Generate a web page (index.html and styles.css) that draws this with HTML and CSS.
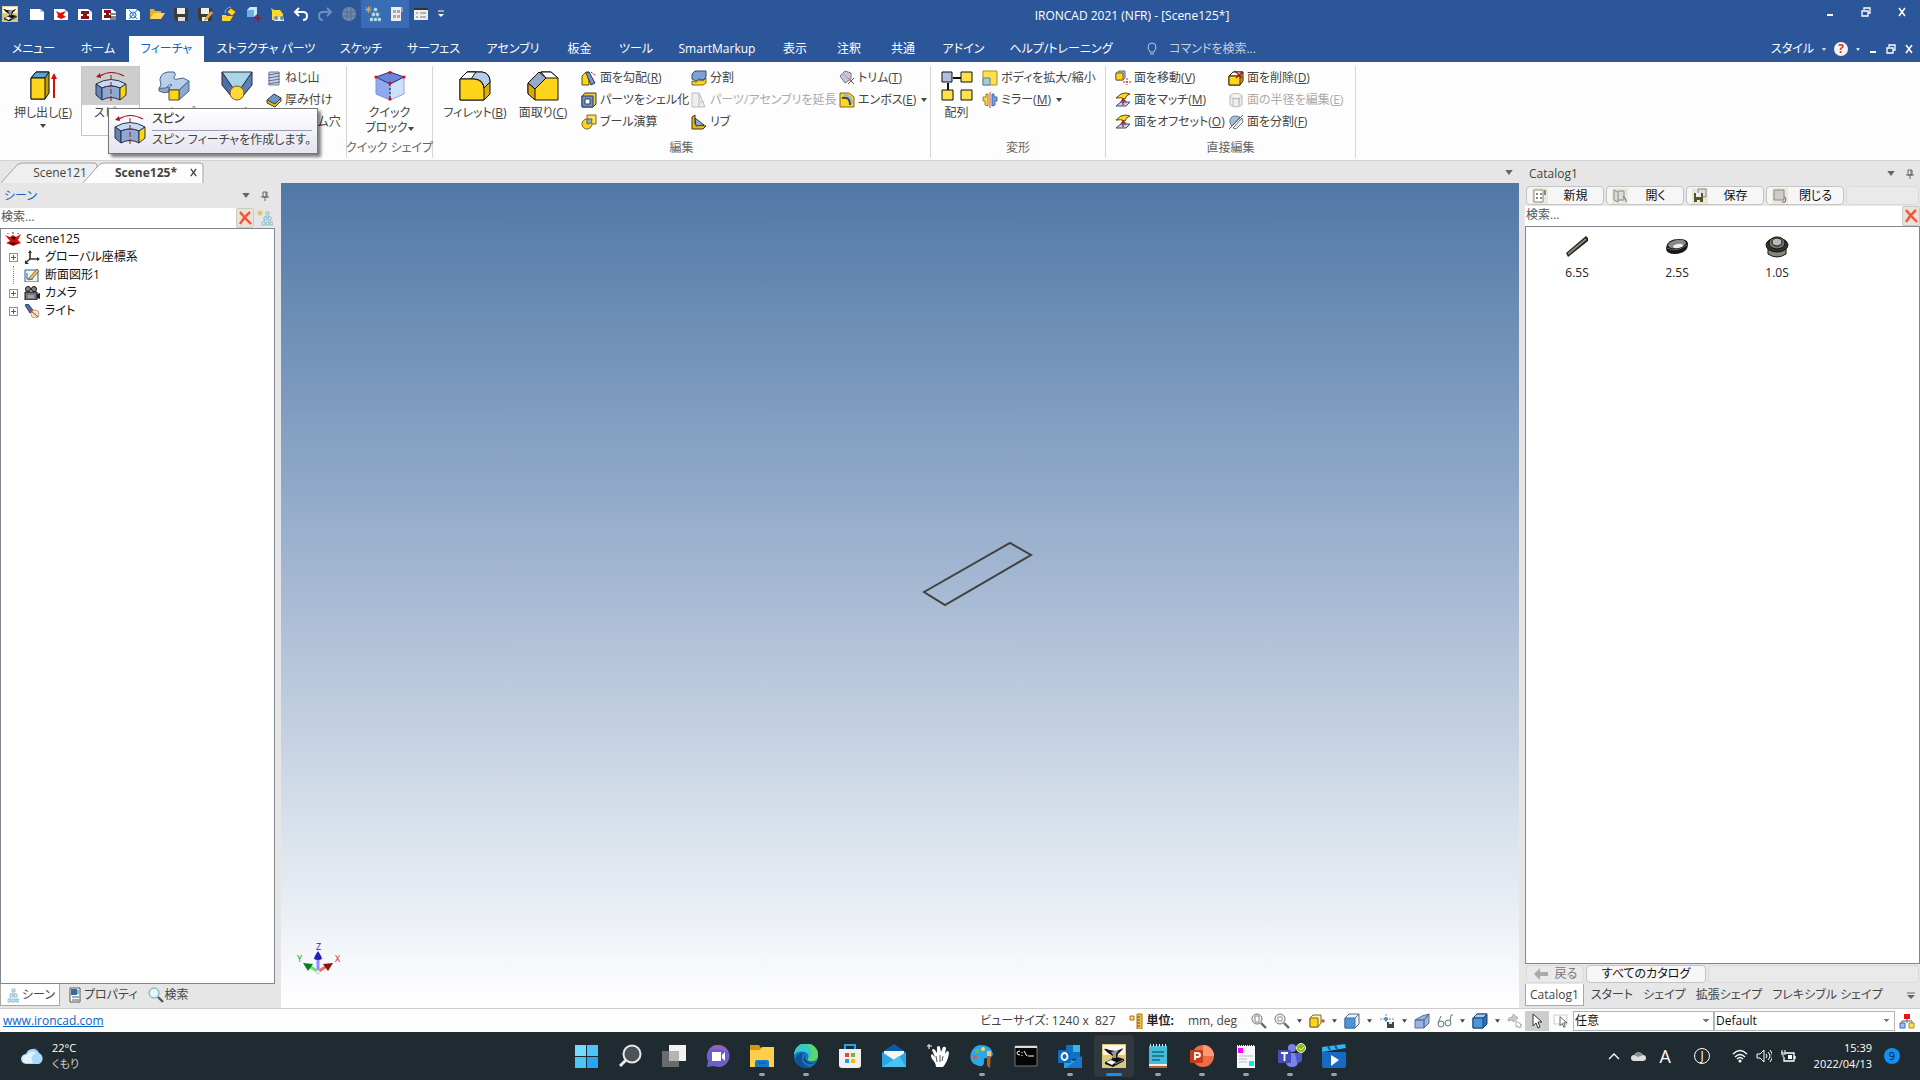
FILE: index.html
```html
<!DOCTYPE html>
<html lang="ja">
<head>
  <meta charset="UTF-8" />
  <meta name="viewport" content="width=device-width, initial-scale=1.0"/>
  <title>IRONCAD 2021 (NFR) - [Scene125*]</title>
  <link rel="stylesheet" href="styles.css">
</head>
<body>
  <!-- shared icons -->
  <svg class="defs" aria-hidden="true">
    <symbol id="i-logo" viewBox="0 0 24 24">
      <rect width="24" height="24" fill="#d9c980"/><path d="M1 1h22v10H1z" fill="#fff3cf"/>
      <path d="M2 5l4 4 5 3-1 3-7 3v2l8 3 11-6v-2l-7-2 1-3 5-5V3z" fill="#111"/>
      <path d="M3 4l6-2 11 0 2 2-8 3-7-1z" fill="#fafafa"/><path d="M9 8l8-2-3 4v4h-3v-3z" fill="#999"/>
      <path d="M4 18l5-2 5 2-4 3z" fill="#f2f2f2"/><path d="M13 20l8-4" stroke="#888"/>
    </symbol>
    <symbol id="i-spin" viewBox="0 0 32 30">
      <path d="M5 5Q16-2 29 5" fill="none" stroke="#a01820" stroke-width="1.2"/><path d="M1 6l4-4 1 5z" fill="#a01820"/>
      <path d="M1 13Q16 4 31 13L25 17Q16 13 7 17z" fill="#c5daf0" stroke="#26324a"/>
      <path d="M1 13l6 4v12l-6-5z" fill="#6884b4" stroke="#26324a"/><path d="M7 17q9-4 18 0v12q-9-5-18 0z" fill="#8fa9d2" stroke="#26324a"/>
      <path d="M25 17l6-4v11l-6 5z" fill="#ffd60a" stroke="#26324a"/><path d="M16 4v26" stroke="#a01820" stroke-dasharray="5 2"/>
    </symbol>
    <symbol id="i-caret" viewBox="0 0 6 4"><path d="M0 0h6L3 4z" fill="currentColor"/></symbol>
    <symbol id="i-pin" viewBox="0 0 8 10"><path d="M2 1h4v5H2zM0 6h8M4 6v4M5 1v5" fill="none" stroke="#666"/></symbol>
    <symbol id="i-x" viewBox="0 0 16 16"><path d="M3 2q4 5 11 12M13 2Q7 7 3 14" stroke="#f4523a" stroke-width="2.4" fill="none"/></symbol>
    <symbol id="i-tree" viewBox="0 0 16 16">
      <path d="M10 3L6 14M10 3l4 11M8 9h4" stroke="#8ebbd0" stroke-dasharray="2 1" fill="none"/>
      <path d="M9 2h3v3H9zM7 7h3v3H7zM11 7h3v3h-3zM5 12h3v3H5zM9 12h3v3H9zM13 12h3v3h-3z" fill="#d4edf4" stroke="#79a9bd" stroke-width=".7"/>
    </symbol>
    <symbol id="i-star" viewBox="0 0 8 8"><path d="M4 0v8M0 4h8M1 1l6 6M7 1L1 7" stroke="#e9ad35" stroke-width="1"/></symbol>
    <symbol id="i-restore" viewBox="0 0 10 10"><path d="M3 3V1h6v5H7M1 4h6v5H1z" fill="none" stroke="#fff" stroke-width="1.3"/></symbol>
    <symbol id="i-close" viewBox="0 0 10 10"><path d="M2 1l6 8M8 1L2 9" stroke="currentColor" stroke-width="1.5"/></symbol>
    <symbol id="i-min" viewBox="0 0 10 10"><path d="M2 8h6" stroke="#fff" stroke-width="2"/></symbol>
    <symbol id="i-cube" viewBox="0 0 16 16">
      <path d="M1 5l4-4h10v10l-4 4H1z" fill="#eef4fa" stroke="#56687c"/><path d="M1 5h10v10H1z" fill="#4b96db" stroke="#3b70a4"/><path d="M11 5l4-4" stroke="#56687c"/>
    </symbol>
    <symbol id="i-match" viewBox="0 0 16 16">
      <path d="M1 14l5-4h9l-4 4z" fill="#c3d2f0" stroke="#314a82"/>
      <path d="M1 6l5-4q5-2 9 0-4 1-5 5-4-2-9-1z" fill="#ffd91e" stroke="#5b4b08"/>
      <path d="M8 13V8M6 10l2-3 3 3" fill="none" stroke="#c01515" stroke-width="1.3"/>
    </symbol>
    <symbol id="i-cursor" viewBox="0 0 12 16"><path d="M2 1v12l3-3 2 5 2-1-2-5h4z" fill="#fff" stroke="#333"/></symbol>
  </svg>

  <header class="top">
    <div class="titlebar">
      <div class="quick">
        <button class="q-logo" aria-label="IRONCAD"><svg viewBox="0 0 16 16"><use href="#i-logo"/></svg></button>
        <button aria-label="新規"><svg viewBox="0 0 16 16"><path d="M1 3h10l4 3v8H1z" fill="#fff"/><path d="M11 3v3h4" fill="#ccc"/></svg></button>
        <button aria-label="シーン"><svg viewBox="0 0 16 16"><path d="M1 3h10l4 3v8H1z" fill="#fff"/><path d="M3 5l4 2 6-2-3 4 3 2-5 2-4-2 1-2z" fill="#e01010"/></svg></button>
        <button aria-label="図面"><svg viewBox="0 0 16 16"><path d="M1 3h10l4 3v8H1z" fill="#fff"/><path d="M4 5h8v3h-2v2h2v3H4v-3h2V8H4z" fill="#8c1018"/></svg></button>
        <button aria-label="図面 2"><svg viewBox="0 0 16 16"><path d="M1 3h10l4 3v8H1z" fill="#fff"/><path d="M3 4h7v3H8v2h2v3H3V9h2V7H3z" fill="#8c1018"/><path d="M9 8h6M9 11h6M9 13h6" stroke="#111"/></svg></button>
        <button aria-label="スケッチ"><svg viewBox="0 0 16 16"><path d="M1 3h10l4 3v8H1z" fill="#fff"/><path d="M4 4l8 9M12 4l-8 9" stroke="#167ec5"/><circle cx="8" cy="9" r="3" fill="none" stroke="#167ec5"/></svg></button>
        <button aria-label="開く"><svg viewBox="0 0 16 16"><path d="M1 13V3h4l1 2h6v3" fill="#e4ae28"/><path d="M1 13l4-6h11l-4 6z" fill="#ffd55c"/></svg></button>
        <button aria-label="保存"><svg viewBox="0 0 16 16"><path d="M1 2h14v13H3l-2-2z" fill="#3b3b3b"/><path d="M4 2h8v6H4z" fill="#eee"/><path d="M5 11h7v4H5z" fill="#ddd"/></svg></button>
        <button aria-label="名前を付けて保存"><svg viewBox="0 0 16 16"><path d="M1 2h14v13H3l-2-2z" fill="#3b3b3b"/><path d="M4 2h8v6H4zM5 11h6v4H5z" fill="#eee"/><path d="M8 12l6-7 2 2-6 7-3 1z" fill="#e7a23a"/></svg></button>
        <button aria-label="パーツを開く"><svg viewBox="0 0 16 16"><path d="M1 15V9h4l1 1h6l-3 5z" fill="#ffd132"/><path d="M6 6l4-4 5 4-4 4z" fill="#ffd132" stroke="#765b11"/><path d="M4 7q0-5 6-6" fill="none" stroke="#6db3ea"/></svg></button>
        <button aria-label="追加"><svg viewBox="0 0 16 16"><path d="M2 4l3-3h7v7l-3 3H2z" fill="#cfe8fb"/><path d="M2 4h7v7H2z" fill="#6baee6"/><path d="M13 9v7M9 12h7" stroke="#a20f24" stroke-width="1.4"/></svg></button>
        <button aria-label="検索"><svg viewBox="0 0 16 16"><path d="M2 2l3 2h6l3 4v6H3V5z" fill="#ffd929"/><path d="M5 11h10v4H5z" fill="#e2eaf1"/><circle cx="7" cy="12" r="2" fill="#5b8dc7"/><circle cx="13" cy="12" r="2" fill="#5b8dc7"/></svg></button>
        <button aria-label="元に戻す"><svg viewBox="0 0 16 16"><path d="M6 2L2 6l4 4M2 6h8q4 0 4 4t-4 4" fill="none" stroke="#fff" stroke-width="2"/></svg></button>
        <button aria-label="やり直し"><svg viewBox="0 0 16 16"><path d="M10 2l4 4-4 4M14 6H6q-4 0-4 4t4 4" fill="none" stroke="#6f8fbc" stroke-width="2"/></svg></button>
        <button aria-label="球"><svg viewBox="0 0 16 16"><circle cx="8" cy="8" r="7" fill="#7388a9"/><path d="M2 6h12M2 10h12M6 2v12M10 2v12" stroke="#526d96"/></svg></button>
        <button class="on" aria-label="シーンブラウザ"><svg viewBox="0 0 16 16"><use href="#i-tree"/><use href="#i-star" width="7" height="7"/></svg></button>
        <button class="on" aria-label="カタログ"><svg viewBox="0 0 16 16"><path d="M2 1h10v14H2z" fill="#eee"/><path d="M12 1h2v5h-2" fill="#999"/><path d="M4 4h3v3H4zM8 4h3v3H8zM4 9h3v3H4zM8 9h3v3H8z" fill="#aaa"/></svg></button>
        <button aria-label="プロパティ"><svg viewBox="0 0 16 16"><path d="M1 2h14v12H1z" fill="#eee"/><path d="M1 2h14v2H1z" fill="#333"/><path d="M3 7h2M3 11h2M7 7h6M7 11h6" stroke="#777"/></svg></button>
        <button class="q-more" aria-label="カスタマイズ"><svg viewBox="0 0 8 8"><path d="M1 1h6" stroke="#fff"/><path d="M1 4h6L4 7z" fill="#fff"/></svg></button>
      </div>
      <div class="app-title">IRONCAD 2021 (NFR) - [Scene125*]</div>
      <div class="win">
        <button aria-label="最小化"><svg><use href="#i-min"/></svg></button>
        <button aria-label="元に戻す (縮小)"><svg><use href="#i-restore"/></svg></button>
        <button aria-label="閉じる"><svg><use href="#i-close"/></svg></button>
      </div>
    </div>
    <div class="menubar">
      <nav class="tabs">
        <a href="#">メニュー</a>
        <a href="#">ホーム</a>
        <a href="#" class="active">フィーチャ</a>
        <a href="#">ストラクチャ パーツ</a>
        <a href="#">スケッチ</a>
        <a href="#">サーフェス</a>
        <a href="#">アセンブリ</a>
        <a href="#">板金</a>
        <a href="#">ツール</a>
        <a href="#">SmartMarkup</a>
        <a href="#">表示</a>
        <a href="#">注釈</a>
        <a href="#">共通</a>
        <a href="#">アドイン</a>
        <a href="#">ヘルプ/トレーニング</a>
      </nav>
      <label class="cmd">
        <svg viewBox="0 0 10 14"><path d="M3 10Q1 7 1 5a4 4 0 0 1 8 0q0 2-2 5zM3 12h4" fill="none" stroke="#b9c6dc"/></svg>
        <input type="text" placeholder="コマンドを検索..." aria-label="コマンドを検索">
      </label>
      <div class="menu-right">
        <button>スタイル</button>
        <svg class="caret"><use href="#i-caret"/></svg>
        <button aria-label="ヘルプ" class="help">?</button>
        <svg class="caret"><use href="#i-caret"/></svg>
        <button aria-label="最小化"><svg><use href="#i-min"/></svg></button>
        <button aria-label="元に戻す"><svg><use href="#i-restore"/></svg></button>
        <button aria-label="閉じる"><svg><use href="#i-close"/></svg></button>
      </div>
    </div>
  </header>

  <section class="ribbon">
    <div class="group g-shape">
      <div class="tools">
        <button class="big first">
          <svg viewBox="0 0 32 30"><path d="M4 7l5-6h13v21l-4 6H4z" fill="#c79a04" stroke="#111"/><path d="M4 7l5-6h13l-4 6z" fill="#5aa2d8" stroke="#111"/><path d="M4 7h14v21H4z" fill="#ffd51c" stroke="#111"/><path d="M27 27V7" stroke="#c11" stroke-width="2"/><path d="M24 8l3-6 3 6z" fill="#c11"/></svg>
          <span>押し出し(<u>E</u>)</span><svg class="caret"><use href="#i-caret"/></svg>
        </button>
        <button class="big hover"><svg viewBox="0 0 32 30"><use href="#i-spin"/></svg><span>スピン</span></button>
        <button class="big">
          <svg viewBox="0 0 32 30"><path d="M1 17v3q5 3 10 1v-5z" fill="#8ba7d0" stroke="#4b6286"/><path d="M2 8q1-6 8-7h6q3 2 0 5-1 3 4 2l5-1 6 3-10 9H11q0-4 3-5-3-1-4 1-1 3-9 2 2-2 2-4-1-2-1-5z" fill="#b8cfeb" stroke="#4b6286"/><path d="M21 19l10-9v10l-10 9z" fill="#8ba7d0" stroke="#4b6286"/><path d="M11 19h10v10H11z" fill="#ffd51c" stroke="#554b20"/></svg>
          <span>スイープ</span>
        </button>
        <button class="big">
          <svg viewBox="0 0 32 30"><path d="M1 1v13l9 11 2-9z" fill="#4f6fa8" stroke="#222b40"/><path d="M31 1v13l-9 11-2-9z" fill="#5f7eb5" stroke="#222b40"/><path d="M1 1h30L20 17h-8z" fill="#a8d6e6" stroke="#222b40"/><circle cx="16" cy="22" r="7" fill="#ffd93b" stroke="#735b12"/></svg>
          <span>ロフト</span>
        </button>
        <div class="stack">
          <button><svg viewBox="0 0 16 16"><path d="M3 2h10v13H3z" fill="#c6d2e4" stroke="#73829b"/><path d="M2 5l12-2M2 8l12-2M2 11l12-2M2 14l12-2" stroke="#60718d"/></svg><span>ねじ山</span></button>
          <button><svg viewBox="0 0 16 16"><path d="M1 8v3l8 4 6-6V6z" fill="#e9bd10" stroke="#4d4010"/><path d="M1 8l7-6 7 4-6 6z" fill="#6f93c8" stroke="#303c58"/></svg><span>厚み付け</span></button>
          <button><svg viewBox="0 0 16 16"><path d="M1 5l7-4 7 4v7l-7 3-7-3z" fill="#ffd51c" stroke="#554410"/><ellipse cx="8" cy="6" rx="3" ry="2" fill="#4f6fa8"/></svg><span>カスタム穴</span></button>
        </div>
      </div>
      <div class="tip" role="tooltip">
        <svg viewBox="0 0 32 30"><use href="#i-spin"/></svg>
        <div><strong>スピン</strong><p>スピン フィーチャを作成します。</p></div>
      </div>
    </div>
    <div class="group g-quick">
      <div class="tools">
        <button class="big">
          <svg viewBox="0 0 32 30"><path d="M2 6l14 7v16L2 23z" fill="#8faaf0" stroke="#7d92dc"/><path d="M30 6l-14 7v16l14-6z" fill="#cfe1fa" stroke="#8fa8df"/><path d="M2 6l14-5 14 5-14 7z" fill="#6d84dd" stroke="#27346e"/><path d="M16 13v16" stroke="#111" stroke-dasharray="2 2"/><g fill="#f00"><circle cx="2" cy="6" r="1.6"/><circle cx="16" cy="1.6" r="1.6"/><circle cx="30" cy="6" r="1.6"/><circle cx="16" cy="12" r="1.6"/><circle cx="16" cy="28" r="1.6"/></g></svg>
          <span>クイック<br>ブロック<svg class="caret"><use href="#i-caret"/></svg></span>
        </button>
      </div>
      <h2>クイック シェイプ</h2>
    </div>
    <div class="group g-edit">
      <div class="tools">
        <button class="big">
          <svg viewBox="0 0 32 30"><path d="M1 8l7-7h15q8 1 8 10v12l-6 6H1z" fill="#dcae08" stroke="#111"/><path d="M1 8l7-7h15q8 1 8 10l-6 6q-1-9-10-9z" fill="#b3cdea" stroke="#111"/><path d="M1 8l7-7h9l-5 7z" fill="#fff" stroke="#111"/><path d="M1 29V8h14q10 1 10 11v10z" fill="#ffd51c" stroke="#111"/></svg>
          <span>フィレット(<u>B</u>)</span>
        </button>
        <button class="big">
          <svg viewBox="0 0 32 30"><path d="M1 13L14 1h10l7 6v22H8l-7-7z" fill="#ffd51c" stroke="#111"/><path d="M14 1h10l7 6H19z" fill="#fff" stroke="#111"/><path d="M1 12L12 1l7 6L8 18z" fill="#94a9cb" stroke="#111"/><path d="M1 12l7 6v11l-7-6z" fill="#d9ab08" stroke="#111"/></svg>
          <span>面取り(<u>C</u>)</span>
        </button>
        <div class="stack">
          <button><svg viewBox="0 0 16 16"><path d="M1 6l4-4h3v13H1z" fill="#ffd51c" stroke="#5b4b08"/><path d="M5 3l3-1 6 11-4 2z" fill="#7796c4" stroke="#2b3b5c"/><path d="M10 2l5 4" stroke="#c11" stroke-dasharray="2 1"/></svg><span>面を勾配(<u>R</u>)</span></button>
          <button><svg viewBox="0 0 16 16"><path d="M1 4l3-3h11v11l-3 3H1z" fill="#f0c93c" stroke="#313c52"/><path d="M1 4h11v11H1z" fill="#6c93c7" stroke="#313c52"/><path d="M4 7h5v5H4z" fill="#fff" stroke="#313c52"/></svg><span>パーツをシェル化</span></button>
          <button><svg viewBox="0 0 16 16"><path d="M6 1h9v9H6z" fill="#ffe24a" stroke="#80671d"/><circle cx="6" cy="10" r="5" fill="#ffd51c" stroke="#80671d"/><path d="M6 5h5q0 5-5 5z" fill="#8ea8d8" stroke="#4b638f"/></svg><span>ブール演算</span></button>
        </div>
        <div class="stack">
          <button><svg viewBox="0 0 16 16"><path d="M1 4l3-3h11v6l-3 3-4-1-3 2-4-2z" fill="#7ba1d6" stroke="#31486d"/><path d="M1 11l4 1 3-2 4 1 3-3v5l-3 2H1z" fill="#ffd51c" stroke="#80671d"/></svg><span>分割</span></button>
          <button disabled><svg viewBox="0 0 16 16"><path d="M1 1h7l6 14H1zM8 1v14M9 10h4" fill="#eee" stroke="#bbb"/></svg><span>パーツ/アセンブリを延長</span></button>
          <button><svg viewBox="0 0 16 16"><path d="M1 3l3-2v9l11 2-3 3H1z" fill="#e7bd14" stroke="#403610"/><path d="M4 4l9 7-8 1z" fill="#8caad8" stroke="#283b5a"/></svg><span>リブ</span></button>
        </div>
        <div class="stack">
          <button><svg viewBox="0 0 16 16"><path d="M1 6l5-5 6 2v6l-6 4z" fill="#bdc9dc" stroke="#777"/><path d="M9 8l6 6M15 8l-6 6" stroke="#555"/><path d="M3 3l9 8" stroke="#e77"/></svg><span>トリム(<u>T</u>)</span></button>
          <button><svg viewBox="0 0 16 16"><path d="M1 1h9l5 4v10H1z" fill="#ffd51c" stroke="#80671d"/><path d="M3 6q8-2 8 7" fill="none" stroke="#304467" stroke-width="2"/><path d="M5 3q8 0 8 9" fill="none" stroke="#9bb3d8" stroke-width="2"/></svg><span>エンボス(<u>E</u>)</span><svg class="caret"><use href="#i-caret"/></svg></button>
        </div>
      </div>
      <h2>編集</h2>
    </div>
    <div class="group g-trans">
      <div class="tools">
        <button class="big">
          <svg viewBox="0 0 32 30"><path d="M12 7h8M7 12v7" stroke="#111" stroke-width="2"/><path d="M1 1h10v10H1z" fill="#aebfe2" stroke="#111"/><path d="M20 1h11v10H20zM1 19h11v10H1zM20 19h11v10H20z" fill="#ffe24a" stroke="#111"/></svg>
          <span>配列</span>
        </button>
        <div class="stack">
          <button><svg viewBox="0 0 16 16"><path d="M1 1h14v14H1z" fill="#ffe24a" stroke="#a88d28"/><path d="M1 8h7v7H1z" fill="#a5cbe0" stroke="#5b829b"/></svg><span>ボディを拡大/縮小</span></button>
          <button><svg viewBox="0 0 16 16"><path d="M6 2v12l-3-1V9H1V5h3V2z" fill="#ffd944" stroke="#9a8025"/><path d="M10 2v12l3-1V9h2V5h-3V2z" fill="#6da5e9" stroke="#3d6ea9"/><path d="M8 0v16" stroke="#e33"/></svg><span>ミラー(<u>M</u>)</span><svg class="caret"><use href="#i-caret"/></svg></button>
        </div>
      </div>
      <h2>変形</h2>
    </div>
    <div class="group g-direct">
      <div class="tools">
        <div class="stack">
          <button><svg viewBox="0 0 16 16"><path d="M1 3l3-2h6v7l-2 2H1z" fill="#9db8df" stroke="#5a6f94"/><path d="M1 3h7v7H1z" fill="#ffd51c" stroke="#80671d"/><path d="M12 8v7M8 12h8" stroke="#b22" stroke-dasharray="2 1"/></svg><span>面を移動(<u>V</u>)</span></button>
          <button><svg viewBox="0 0 16 16"><use href="#i-match"/></svg><span>面をマッチ(<u>M</u>)</span></button>
          <button><svg viewBox="0 0 16 16"><use href="#i-match"/></svg><span>面をオフセット(<u>O</u>)</span></button>
        </div>
        <div class="stack">
          <button><svg viewBox="0 0 16 16"><path d="M1 6l4-4h10v9l-3 4H1z" fill="#d1a50b" stroke="#332b0c"/><path d="M1 6l4-4h10l-3 4z" fill="#fff" stroke="#332b0c"/><path d="M1 6h11v9H1z" fill="#ffd51c" stroke="#332b0c"/><path d="M7 1l7 7M14 2L8 8" stroke="#b11" stroke-width="1.3"/></svg><span>面を削除(<u>D</u>)</span></button>
          <button disabled><svg viewBox="0 0 16 16"><path d="M2 4v9q6 4 12 0V4M5 6v8M11 6v8M7 7h4v4" fill="#eee" stroke="#bbb"/><ellipse cx="8" cy="4" rx="6" ry="2.5" fill="#f3f3f3" stroke="#bbb"/></svg><span>面の半径を編集(<u>E</u>)</span></button>
          <button><svg viewBox="0 0 16 16"><path d="M2 9q-1-7 6-7l4 1-8 9z" fill="#a7bbdb" stroke="#65789b"/><path d="M5 14l9-10 1 4-7 7z" fill="#eee" stroke="#777"/><path d="M1 15L15 1" stroke="#d33"/></svg><span>面を分割(<u>F</u>)</span></button>
        </div>
      </div>
      <h2>直接編集</h2>
    </div>
  </section>

  <main class="work">
    <div class="docs">
      <div class="doctabs">
        <button class="doctab"><svg viewBox="0 0 98 21" preserveAspectRatio="none"><path d="M1 21L16 4q3-3 6-3h72q3 0 3 3v17"/></svg><span>Scene121</span></button>
        <button class="doctab current"><svg viewBox="0 0 122 21" preserveAspectRatio="none"><path d="M1 21L16 4q3-3 6-3h96q3 0 3 3v17"/></svg><span>Scene125*</span><svg class="tabx"><use href="#i-close"/></svg></button>
        <svg class="caret docs-menu"><use href="#i-caret"/></svg>
      </div>
      <div class="docbody">
        <aside class="panel scene">
          <div class="panel-head"><span class="blue">シーン</span><svg class="caret"><use href="#i-caret"/></svg><svg class="pin"><use href="#i-pin"/></svg></div>
          <div class="searchrow">
            <input type="text" placeholder="検索..." aria-label="シーンを検索">
            <button aria-label="クリア" class="clear"><svg><use href="#i-x"/></svg></button>
            <button aria-label="フィルタ" class="filter"><svg viewBox="0 0 16 16"><use href="#i-tree"/><use href="#i-star" width="6" height="6"/></svg></button>
          </div>
          <ul class="tree">
            <li class="root"><svg viewBox="0 0 16 14"><path d="M0 3l5 2 3-2 3 2 5-3-3 6 3 3-8 3-7-3 4-2z" fill="#d41414"/><path d="M6 5l3 4 2-4zM3 10l5 3 5-2" fill="#400" /><path d="M8 0v2M3 1v1M13 1v1" stroke="#333"/></svg>Scene125</li>
            <li><i class="plus"></i><svg viewBox="0 0 16 14"><path d="M6 1v8h9M6 9l-5 4" fill="none" stroke="#333" stroke-width="1.6"/><path d="M4 3l2-3 2 3zM13 7l3 2-3 2zM1 10v4h4z" fill="#333"/></svg>グローバル座標系</li>
            <li><i class="plus none"></i><svg viewBox="0 0 16 14"><path d="M1 2h13v12H1z" fill="#e9f4fb" stroke="#2e5d8c"/><path d="M3 5v6h6" fill="none" stroke="#2e5d8c"/><path d="M5 10l8-9 2 2-7 8-3 1z" fill="#efb65c" stroke="#5b4524" stroke-width=".7"/></svg>断面図形1</li>
            <li><i class="plus"></i><svg viewBox="0 0 16 14"><circle cx="4" cy="3" r="2.5" fill="#888" stroke="#111"/><circle cx="10" cy="3" r="2.5" fill="#888" stroke="#111"/><path d="M1 6h12v8H1z" fill="#777" stroke="#111"/><path d="M13 8l3-1v6l-3-1z" fill="#222"/><path d="M4 9h6v3H4z" fill="#a99bc9"/></svg>カメラ</li>
            <li><i class="plus"></i><svg viewBox="0 0 16 14"><path d="M1 1l3-1 5 6-3 3z" fill="#3d70b3" stroke="#23456f"/><circle cx="11" cy="10" r="4" fill="#f3e4c4" stroke="#b8a582"/><path d="M6 6l8 7" stroke="#d22"/></svg>ライト</li>
          </ul>
          <div class="btabs">
            <button class="current"><svg viewBox="0 0 16 16"><use href="#i-tree" x="-2"/></svg>シーン</button>
            <button><svg viewBox="0 0 16 16"><path d="M3 1h10v14H3z" fill="#fff" stroke="#555"/><path d="M4 2h6v6H4z" fill="#2e6da8"/><path d="M5 10h7M5 13h7M11 3v4" stroke="#555"/></svg>プロパティ</button>
            <button><svg viewBox="0 0 16 16"><circle cx="6" cy="6" r="5" fill="#dff6fb" stroke="#7c99a5"/><path d="M10 10l5 5" stroke="#555" stroke-width="2.4"/></svg>検索</button>
          </div>
        </aside>
        <div class="view">
          <svg class="sketch" viewBox="0 0 112 66"><path d="M2 51L88 2l21 12-86 50z" fill="none" stroke="#404040" stroke-width="2"/></svg>
          <!-- axis triad -->
          <svg class="triad" viewBox="0 0 48 34">
            <path d="M22 26V14" stroke="#8c8cff" stroke-width="3"/><path d="M18 14q0-2 4-8 4 6 4 8-4 2-8 0z" fill="#2222b5"/>
            <path d="M21 26l-8-5" stroke="#6fe07a" stroke-width="3"/><path d="M7 18l10 1-5 7z" fill="#0b7d14"/>
            <path d="M23 26l8-5" stroke="#f36a6a" stroke-width="3"/><path d="M37 18l-10 1 5 7z" fill="#8d0f12"/>
            <circle cx="22" cy="27" r="2" fill="#eee" stroke="#bbb" stroke-width=".5"/>
          </svg>
          <span class="ax ax-z">Z</span><span class="ax ax-y">Y</span><span class="ax ax-x">X</span>
        </div>
      </div>
    </div>
    <aside class="panel catalog">
      <div class="panel-head"><span>Catalog1</span><svg class="caret"><use href="#i-caret"/></svg><svg class="pin"><use href="#i-pin"/></svg></div>
      <div class="catbtns">
        <button><svg viewBox="0 0 16 16"><path d="M0 0h16v16H0z" fill="#ece8d8"/><path d="M2 2h9v12H2z" fill="#fff" stroke="#888"/><path d="M12 2h2v5h-2z" fill="#888"/><path d="M4 5h2v2H4zM8 5h2v2H8zM4 9h2v2H4zM8 9h2v2H8z" fill="#888"/></svg><span>新規</span></button>
        <button><svg viewBox="0 0 16 16"><path d="M0 0h16v16H0z" fill="#ece8d8"/><path d="M2 2l4 2v10l-4-2zM6 3h6v9H6" fill="#ddd" stroke="#888"/><path d="M11 9q3 0 3 5" fill="none" stroke="#666"/></svg><span>開く</span></button>
        <button><svg viewBox="0 0 16 16"><path d="M0 0h16v16H0z" fill="#ece8d8"/><path d="M6 1h8v8H6z" fill="#ddd" stroke="#888"/><path d="M2 5h9v9H2z" fill="#55552a"/><path d="M4 5h5v4H4zM5 12h3v2H5z" fill="#eee"/></svg><span>保存</span></button>
        <button><svg viewBox="0 0 16 16"><path d="M0 0h16v16H0z" fill="#ece8d8"/><path d="M2 2h10v10H2z" fill="#ccc" stroke="#888"/><path d="M12 9q3 0 1 5h-3" fill="none" stroke="#666"/></svg><span>閉じる</span></button>
        <div class="blank"></div>
      </div>
      <div class="searchrow">
        <input type="text" placeholder="検索..." aria-label="カタログを検索">
        <button aria-label="クリア" class="clear"><svg><use href="#i-x"/></svg></button>
      </div>
      <div class="items">
        <figure><svg viewBox="0 0 24 24"><path d="M1 18L21 1l2 2v3L3 22z" fill="#222"/><path d="M3 19L21 4" stroke="#8d8878" stroke-width="2"/></svg><figcaption>6.5S</figcaption></figure>
        <figure><svg viewBox="0 0 24 24"><path d="M1 13q1-9 13-9 9 0 9 5 0 9-13 10-9 0-9-6z" fill="#161616"/><ellipse cx="12" cy="9" rx="9" ry="4" transform="rotate(-10 12 9)" fill="#888"/><ellipse cx="13" cy="11" rx="5" ry="2" transform="rotate(-10 13 11)" fill="#eee"/><path d="M2 13q9 5 20-3" stroke="#666" fill="none"/></svg><figcaption>2.5S</figcaption></figure>
        <figure><svg viewBox="0 0 24 24"><path d="M3 12v7q9 6 18 0v-7z" fill="#8a8475" stroke="#111"/><ellipse cx="12" cy="10" rx="11" ry="7" fill="#333" stroke="#111"/><ellipse cx="12" cy="8" rx="8" ry="6" fill="#77736a" stroke="#111"/><ellipse cx="12" cy="7" rx="5" ry="4" fill="#bbb" stroke="#111"/></svg><figcaption>1.0S</figcaption></figure>
      </div>
      <div class="backrow">
        <button disabled><svg viewBox="0 0 16 16"><path d="M1 8l6-6v4h8v4H7v4z" fill="#aaa"/></svg>戻る</button>
        <button class="all">すべてのカタログ</button>
        <div class="blank"></div>
      </div>
      <div class="btabs">
        <button class="current">Catalog1</button>
        <button>スタート</button>
        <button>シェイプ</button>
        <button>拡張シェイプ</button>
        <button>フレキシブル シェイプ</button>
        <svg class="more" viewBox="0 0 8 8"><path d="M0 1h8" stroke="#666"/><path d="M0 3h8L4 7z" fill="#666"/></svg>
      </div>
    </aside>
  </main>

  <footer class="status">
    <a href="#">www.ironcad.com</a>
    <span class="size">ビューサイズ: 1240 x&nbsp; 827</span>
    <svg class="ic" viewBox="0 0 16 16"><path d="M9 1h5v15H9z" fill="#f4bc4a" stroke="#a8741a"/><path d="M9 4h3M9 7h3M9 10h3M9 13h3" stroke="#7b5312"/><path d="M2 3h4v4H2z" fill="#f4d77b" stroke="#a8741a"/></svg>
    <strong>単位:</strong>
    <span class="unit">mm, deg</span>
    <div class="vtools">
      <button aria-label="全体表示"><svg viewBox="0 0 16 16"><circle cx="6" cy="6" r="5" fill="#eef4f6" stroke="#777"/><path d="M4 3h4v6H4z" fill="#fff" stroke="#888"/><path d="M10 10l5 5" stroke="#666" stroke-width="2.4"/></svg></button>
      <button aria-label="ズーム"><svg viewBox="0 0 16 16"><circle cx="6" cy="6" r="5" fill="#eef4f6" stroke="#777"/><path d="M4 4h4v4H4z" fill="#fff" stroke="#999"/><path d="M10 10l5 5" stroke="#666" stroke-width="2.4"/></svg></button>
      <svg class="caret"><use href="#i-caret"/></svg>
      <button aria-label="向き"><svg viewBox="0 0 16 16"><path d="M1 5l3-3h8v8l-3 4H1z" fill="#fff3b0" stroke="#80671d"/><path d="M1 5h8v9H1z" fill="#ffd51c" stroke="#80671d"/><path d="M12 8h4M14 6v4" stroke="#b22"/></svg></button>
      <svg class="caret"><use href="#i-caret"/></svg>
      <button aria-label="表示方向"><svg viewBox="0 0 16 16"><use href="#i-cube"/></svg></button>
      <svg class="caret"><use href="#i-caret"/></svg>
      <button aria-label="カメラ保存"><svg viewBox="0 0 16 16"><path d="M1 6h14M7 1v9" stroke="#6b8ca8" stroke-dasharray="2 1"/><circle cx="7" cy="6" r="2" fill="#3c8ed2"/><path d="M8 9h7v6H8z" fill="#444"/><path d="M10 9h3v2h-3z" fill="#ddd"/></svg></button>
      <svg class="caret"><use href="#i-caret"/></svg>
      <button aria-label="遠近"><svg viewBox="0 0 16 16"><path d="M1 7h9v8H1zM1 7l7-4 7-2-5 6zM10 7l5-6v9l-5 5z" fill="#9bb4de" stroke="#56709c"/></svg></button>
      <button aria-label="表示"><svg viewBox="0 0 16 16"><circle cx="4" cy="11" r="3" fill="#e9f8f5" stroke="#607d79"/><circle cx="11" cy="10" r="3" fill="#e9f8f5" stroke="#607d79"/><path d="M1 10L4 3M13 8l1-6h2" fill="none" stroke="#607d79"/></svg></button>
      <svg class="caret"><use href="#i-caret"/></svg>
      <button aria-label="レンダリング"><svg viewBox="0 0 16 16"><path d="M1 5l4-4h10v10l-4 4H1z" fill="#2f6fb2" stroke="#1d4270"/><path d="M1 5l4-4h10l-4 4z" fill="#a3cdf2" stroke="#1d4270"/><path d="M1 5h10v10H1z" fill="#4b96db" stroke="#1d4270"/></svg></button>
      <svg class="caret"><use href="#i-caret"/></svg>
      <button aria-label="やり直し選択"><svg viewBox="0 0 16 16"><path d="M1 8q0-4 5-4V1l5 4-5 4V7Q3 7 1 8z" fill="#ccc" stroke="#aaa"/><path d="M9 8v6l2-1 1 2 2-1-1-2h2z" fill="#fff" stroke="#aaa"/></svg></button>
    </div>
    <button class="sel on" aria-label="選択"><svg viewBox="0 0 12 16"><use href="#i-cursor"/></svg></button>
    <button class="sel" aria-label="範囲選択"><svg viewBox="0 0 16 16"><path d="M1 2h13v9H1z" fill="none" stroke="#ccc"/><use href="#i-cursor" x="5" y="3" width="10" height="12"/></svg></button>
    <select aria-label="選択フィルタ" class="s1"><option>任意</option></select>
    <select aria-label="構成" class="s2"><option>Default</option></select>
    <svg class="ic" viewBox="0 0 16 16"><path d="M8 5v5M3 11V8h10v3" fill="none" stroke="#567"/><path d="M5 1h6v5H5z" fill="#e11"/><path d="M1 10h5v5H1z" fill="#9bbdf0" stroke="#456aa8"/><path d="M10 10h5v5h-5z" fill="#ffe24a" stroke="#a88d28"/></svg>
  </footer>

  <div class="taskbar">
    <div class="weather">
      <svg viewBox="0 0 24 18"><path d="M6 17a5 5 0 0 1 0-10 7 7 0 0 1 13-1 6 6 0 0 1 0 11z" fill="#a9dafb"/><path d="M13 1a7 7 0 0 1 6 5 5 5 0 0 1 3 3q-3-5-9-8z" fill="#4d93d8"/><path d="M6 16a4 4 0 0 1 1-8 6 6 0 0 1 9-2q-7 3-3 10z" fill="#e3f4fe"/></svg>
      <div><b>22°C</b><span>くもり</span></div>
    </div>
    <div class="apps">
      <button aria-label="スタート"><svg viewBox="0 0 24 24"><path d="M1 1h11v11H1z" fill="#77dbfc"/><path d="M13 1h11v11H13zM1 13h11v11H1z" fill="#4cc5f9"/><path d="M13 13h11v11H13z" fill="#25a5f5"/></svg></button>
      <button aria-label="検索"><svg viewBox="0 0 24 24"><circle cx="14" cy="10" r="8.500" fill="#4c5357" stroke="#e8e8e8" stroke-width="2"/><path d="M8 16l-6 6" stroke="#e8e8e8" stroke-width="3"/></svg></button>
      <button aria-label="タスクビュー"><svg viewBox="0 0 24 24"><path d="M7 1h17v16H7z" fill="#f2f2f2"/><path d="M0 7h17v16H0z" fill="#777" fill-opacity=".85"/><path d="M7 7h10v10H7z" fill="#b5b5b5"/></svg></button>
      <button aria-label="チャット"><svg viewBox="0 0 24 24"><path d="M12 1a11 11 0 1 1-4 21l-7 1 1-6A11 11 0 0 1 12 1z" fill="#6b5fc8"/><path d="M12 1a11 11 0 0 1 10 7Q12 4 3 6q3-5 9-5z" fill="#8d64c4"/><path d="M6 8h9v9H6z" fill="#fff"/><path d="M16 11l3-3v9l-3-3z" fill="#fff"/></svg></button>
      <button class="run" aria-label="エクスプローラー"><svg viewBox="0 0 24 24"><path d="M0 1h9l2 3v5H0z" fill="#d9950c"/><path d="M0 6h10l2-3h12v20H0z" fill="#ffce4a"/><path d="M5 23v-5q0-2 2-2h10q2 0 2 2v5z" fill="#1a78c8"/><path d="M8 19h8" stroke="#0c559b"/></svg></button>
      <button class="run" aria-label="Edge"><svg viewBox="0 0 24 24"><circle cx="12" cy="12" r="12" fill="#1574c6"/><path d="M0 11A12 12 0 0 1 24 11q0 6-7 6-4 0-3-3 2-4-3-6Q4 6 0 11z" fill="#38c9c6"/><path d="M12 0q12 1 12 11 0 6-7 6-3 0-3-2 8-6-2-15z" fill="#5bd966"/><path d="M8 12q-1 9 8 11-12 3-15-8 3-7 10-7-3 1-3 4z" fill="#0f529b"/><path d="M11 11q-2 6 5 8 4 0 6-1-4 3-9 1-5-3-2-8z" fill="#232b31"/></svg></button>
      <button aria-label="Store"><svg viewBox="0 0 24 24"><path d="M7 7V1h10v6" fill="none" stroke="#28a0e5" stroke-width="2"/><path d="M1 5h22v16q0 3-3 3H4q-3 0-3-3z" fill="#f0f0f0"/><path d="M7 9h4v4H7z" fill="#e8482c"/><path d="M13 9h4v4h-4z" fill="#76b82a"/><path d="M7 15h4v4H7z" fill="#1b9be8"/><path d="M13 15h4v4h-4z" fill="#fbb90f"/></svg></button>
      <button aria-label="メール"><svg viewBox="0 0 24 24"><path d="M0 8l12-8 12 8v4H0z" fill="#0b5ba8"/><path d="M2 7h20v9H2z" fill="#f4f6f8"/><path d="M0 8l12 8 12-8v15H0z" fill="#2aa5e8"/><path d="M0 23l17-11 7 11z" fill="#4bc2f5"/></svg></button>
      <button aria-label="手袋"><svg viewBox="0 0 24 24"><path d="M10 23q0-4-4-8-2-4 0-5l3 3-3-7q1-2 3 0l2 3 0-6q2-2 3 0l1 5 2-5q2-1 3 1l-1 6 2-3q2 0 2 2-1 8-6 14z" fill="#fff"/><path d="M10 12l1 6M14 11v7M17 12l-1 5" stroke="#555"/><path d="M3 0v5M1 2h5" stroke="#fff"/></svg></button>
      <button class="run" aria-label="ペイント"><svg viewBox="0 0 24 24"><path d="M11 1q10 0 12 9-1 5-7 4-3 0-2 4 0 5-5 4Q-2 19 1 9 4 1 11 1z" fill="#2da7e8"/><circle cx="5" cy="13" r="2" fill="#e55a35"/><circle cx="7" cy="7" r="2" fill="#6ec22e"/><circle cx="13" cy="5" r="2" fill="#ffd53b"/><path d="M17 8h4l-1 16q-2 0-3-3z" fill="#a86325"/><path d="M17 7h4v5h-4z" fill="#f2c377"/></svg></button>
      <button aria-label="コマンド プロンプト"><svg viewBox="0 0 24 24"><path d="M1 2h22v20H1z" fill="#050505" stroke="#777"/><path d="M1 3h22" stroke="#ddd" stroke-width="2"/><path d="M6 7q-3 0-3 2t3 2M8 8v1M8 11v1M10 7l3 5M14 12h6" stroke="#fff" fill="none"/></svg></button>
      <button class="run" aria-label="Outlook"><svg viewBox="0 0 24 24"><path d="M8 1h14v14H8z" fill="#1470bf"/><path d="M15 1h7v7h-7z" fill="#35b4ef"/><path d="M6 12l10 5 8-5v12H6z" fill="#2b9ee5"/><path d="M8 24l16-12v12z" fill="#1578cc"/><rect y="6" width="13" height="13" rx="1" fill="#0f6cbd"/><ellipse cx="6.500" cy="12.500" rx="3" ry="3.500" fill="none" stroke="#fff" stroke-width="1.800"/></svg></button>
      <button class="run front" aria-label="IRONCAD"><svg viewBox="0 0 24 24"><use href="#i-logo"/></svg></button>
      <button class="run" aria-label="メモ帳"><svg viewBox="0 0 24 24"><path d="M3 2h18v20H3z" fill="#45bcd9"/><path d="M3 22h18v2H3z" fill="#b3642a"/><path d="M3 20h18v2H3z" fill="#eee"/><path d="M6 8h12M6 12h12M6 16h8" stroke="#136a86" stroke-width="1.500"/><path d="M4 1h17" stroke="#dff5fa" stroke-width="3" stroke-dasharray="1 2"/></svg></button>
      <button class="run" aria-label="PowerPoint"><svg viewBox="0 0 24 24"><circle cx="13" cy="12" r="11" fill="#ed6c47"/><path d="M13 1a11 11 0 0 1 11 11H13z" fill="#ff9a73"/><rect y="6" width="13" height="13" rx="1" fill="#c43e1c"/><path d="M5 16V9h2q3 0 3 2t-3 2H5" fill="none" stroke="#fff" stroke-width="1.800"/></svg></button>
      <button class="run" aria-label="ノート"><svg viewBox="0 0 24 24"><path d="M3 1h18v23H3z" fill="#f8f8f8"/><path d="M4 1h17" stroke="#222" stroke-width="2" stroke-dasharray="1 1"/><path d="M4 4h5v5H4z" fill="#f0f"/><path d="M15 17h5v5h-5z" fill="#0ee"/><path d="M5 12h14M5 15h8M5 18h8" stroke="#bbb"/></svg></button>
      <button class="run" aria-label="Teams"><svg viewBox="0 0 24 24"><circle cx="14" cy="4" r="4" fill="#7b83eb"/><path d="M8 9h12v8q0 6-6 6t-6-6z" fill="#7b83eb"/><path d="M17 9h7v6q0 4-5 4z" fill="#5059c9"/><rect y="6" width="13" height="13" rx="1" fill="#464eb8"/><path d="M3 9h7M6.500 9v8" stroke="#fff" stroke-width="1.800"/></svg><svg class="ok" viewBox="0 0 10 10"><circle cx="5" cy="5" r="4.500" fill="#8bbd1e" stroke="#e8f5d0"/><path d="M3 5l2 2 3-3" fill="none" stroke="#fff"/></svg></button>
      <button class="run" aria-label="映画 &amp; テレビ"><svg viewBox="0 0 24 24"><path d="M0 8h24v14q0 2-2 2H2q-2 0-2-2z" fill="#1769c4"/><path d="M0 3l23-3 1 4-24 4z" fill="#33b5e8"/><path d="M6 2l2 4M13 1l2 4" stroke="#0d589e" stroke-width="2"/><path d="M9 11l8 5-8 6z" fill="#fff"/></svg></button>
    </div>
    <div class="tray">
      <svg class="chev" viewBox="0 0 12 8"><path d="M1 7l5-5 5 5" fill="none" stroke="#fff" stroke-width="1.300"/></svg>
      <svg class="cloud" viewBox="0 0 16 12"><path d="M4 11a3 3 0 0 1 0-6 5 5 0 0 1 9 0 3 3 0 0 1 0 6z" fill="#ddd"/><path d="M4 5a5 5 0 0 1 9 0l-5 2z" fill="#8d8d8d"/></svg>
      <span class="ime">A</span>
      <span class="just">J</span>
      <svg class="net" viewBox="0 0 16 14"><path d="M1 5q7-7 14 0M3 8q5-5 10 0M5 10q3-3 6 0" fill="none" stroke="#fff" stroke-width="1.300"/><circle cx="8" cy="12" r="1.500" fill="#fff"/></svg>
      <svg class="net" viewBox="0 0 16 14"><path d="M1 5h3l4-4v12L4 9H1zM10 5q2 2 0 4M12 3q4 4 0 8M14 1q5 6 0 12" fill="none" stroke="#fff"/></svg>
      <svg class="net" viewBox="0 0 16 14"><path d="M6 4h8v8H4V8M15 7v3" fill="none" stroke="#fff" stroke-width="1.300"/><path d="M8 6h4v4H8z" fill="#fff"/><path d="M1 4h5M2 1v5M5 1v5M3 5v3" stroke="#fff" fill="none"/></svg>
      <div class="clock"><span>15:39</span><span>2022/04/13</span></div>
      <span class="badge">9</span>
    </div>
  </div>
</body>
</html>
```
FILE: styles.css
```css
* {
  box-sizing: border-box;
}
body {
  margin: 0;
  height: 100vh;
  display: flex;
  flex-direction: column;
  overflow: hidden;
  font-family: "Open Sans", "Noto Sans CJK JP", sans-serif;
  font-size: 12px;
  line-height: 16px;
  font-feature-settings: "palt";
  color: #444;
  background: #e6e6e6;
}
button, input, select {
  font: inherit;
  font-feature-settings: inherit;
  color: inherit;
  background: none;
  border: none;
  padding: 0;
  margin: 0;
  white-space: nowrap;
}
svg {
  display: block;
  flex: none;
}
a {
  color: inherit;
  text-decoration: none;
}
.defs {
  position: absolute;
  width: 0;
  height: 0;
}
.caret {
  width: 6px;
  height: 4px;
}

/* title bar and menu */
.top {
  background: #2b579a;
  color: #fff;
}
.titlebar {
  display: grid;
  grid-template-columns: 1fr auto 1fr;
  height: 32px;
}
.quick {
  display: flex;
  align-items: flex-start;
}
.quick button {
  width: 24px;
  height: 28px;
  display: flex;
  align-items: center;
  justify-content: center;
}
.quick svg {
  width: 16px;
  height: 16px;
}
.quick .q-logo {
  width: 20px;
  margin-right: 5px;
}
.quick .q-more {
  width: 16px;
}
.quick .q-more svg {
  width: 8px;
  height: 8px;
}
.quick .on {
  background: #3a6bb5;
}
.app-title {
  align-self: center;
  padding-left: 344px;
}
.win {
  display: flex;
  justify-content: flex-end;
  gap: 26px;
  padding: 7px 13px 0 0;
}
.win svg, .menu-right button svg {
  width: 10px;
  height: 10px;
}
.win button {
  height: 10px;
}
.menubar {
  display: flex;
  height: 30px;
}
.tabs {
  display: grid;
  grid-template-columns: 67px 62px 75px 124px 66px 79px 80px 53px 60px 102px 54px 54px 54px 67px 128px;
  padding-top: 4px;
}
.tabs a {
  text-align: center;
  line-height: 26px;
  white-space: nowrap;
}
.tabs .active {
  background: #fdfdfd;
  color: #0a64c8;
}
.cmd {
  display: flex;
  align-items: center;
  gap: 12px;
  padding: 4px 0 0 22px;
}
.cmd svg {
  width: 10px;
  height: 14px;
}
.cmd input {
  width: 110px;
}
.cmd input::placeholder {
  color: #c3cee0;
}
.menu-right {
  display: flex;
  align-items: center;
  gap: 8px;
  margin-left: auto;
  padding: 4px 6px 0 0;
}
.menu-right .help {
  width: 14px;
  height: 14px;
  border-radius: 50%;
  background: #f2f2f2;
  color: #d33;
  font-weight: bold;
  line-height: 14px;
}
.menu-right .caret {
  width: 4px;
  height: 3px;
}

/* ribbon */
.ribbon {
  display: flex;
  height: 99px;
  padding-top: 4px;
  background: #fdfdfd;
  border-bottom: 1px solid #d2d2d2;
}
.group {
  position: relative;
  display: flex;
  flex-direction: column;
  flex: none;
  height: 92px;
  border-right: 1px solid #d5d5d5;
}
.group h2 {
  margin: 0 -4px 2px;
  font-size: 12px;
  font-weight: normal;
  text-align: center;
  color: #666;
  white-space: nowrap;
}
.tools {
  flex: 1;
  display: grid;
  align-items: start;
}
.g-shape {
  width: 347px;
}
.g-shape .tools {
  grid-template-columns: 81px 59px 67px 59px 80px;
}
.g-quick {
  width: 86px;
}
.g-edit {
  width: 498px;
}
.g-edit .tools {
  grid-template-columns: 68px 68px 110px 148px 90px;
  padding-left: 8px;
}
.g-edit .stack {
  padding-left: 4px;
}
.g-trans {
  width: 175px;
}
.g-trans .tools {
  grid-template-columns: 51px 122px;
}
.g-direct {
  width: 250px;
}
.g-direct .tools {
  grid-template-columns: 113px 128px;
  padding-left: 9px;
}
.big {
  display: flex;
  flex-direction: column;
  align-items: center;
  padding-top: 5px;
  line-height: 15px;
}
.big.first {
  padding-left: 5px;
}
.big > svg {
  width: 32px;
  height: 30px;
}
.big > span {
  padding-top: 4px;
}
.big > .caret {
  width: 6px;
  height: 4px;
  margin-top: 4px;
}
.big span .caret {
  display: inline-block;
  vertical-align: middle;
}
.hover {
  height: 70px;
  border: 1px solid #c6c6c6;
  background: linear-gradient(#cdcdcd 38px, #fdfdfd 38px);
  padding-top: 4px;
}
.stack {
  display: flex;
  flex-direction: column;
  padding-top: 1px;
}
.stack button {
  display: flex;
  align-items: center;
  gap: 3px;
  height: 22px;
}
.stack button > svg:first-child {
  width: 16px;
  height: 16px;
}
.stack .caret {
  margin-left: 2px;
}
.stack button:disabled {
  color: #aaa;
}
.tip {
  position: absolute;
  z-index: 2;
  left: 108px;
  top: 42px;
  display: flex;
  gap: 6px;
  width: 210px;
  height: 46px;
  padding: 2px 5px;
  background: linear-gradient(#fff, #e4e5f0);
  border: 1px solid #767676;
  box-shadow: 3px 3px 3px rgba(0, 0, 0, 0.5);
}
.tip svg {
  width: 32px;
  height: 30px;
  margin-top: 3px;
}
.tip div {
  flex: 1;
  min-width: 0;
}
.tip strong {
  display: block;
  height: 20px;
  border-bottom: 1px solid #9c9cb4;
  font-weight: 500;
}
.tip p {
  margin: 1px 0 0;
  white-space: nowrap;
}

/* documents */
.work {
  flex: 1;
  display: flex;
  min-height: 0;
}
.docs {
  flex: 1;
  display: flex;
  flex-direction: column;
  min-width: 0;
}
.doctabs {
  display: flex;
  align-items: flex-end;
  height: 22px;
}
.doctab {
  position: relative;
  width: 98px;
  height: 21px;
}
.doctab > svg:first-child {
  position: absolute;
  left: 0;
  top: 0;
  width: 100%;
  height: 100%;
  fill: #efefef;
  stroke: #a3a3a3;
}
.doctab span {
  position: relative;
  padding-left: 22px;
}
.doctab.current {
  width: 122px;
  margin-left: -16px;
  font-weight: bold;
  text-align: left;
}
.doctab.current > svg:first-child {
  fill: #fdfdfd;
}
.doctab.current span {
  padding-left: 33px;
}
.doctab .tabx {
  position: absolute;
  right: 6px;
  top: 6px;
  width: 9px;
  height: 9px;
}
.docs-menu {
  width: 8px;
  height: 5px;
  margin: 0 6px 8px auto;
  color: #666;
}
.docbody {
  flex: 1;
  display: flex;
  min-height: 0;
}
.panel {
  display: flex;
  flex-direction: column;
}
.scene {
  width: 281px;
  padding-right: 6px;
}
.panel-head {
  display: flex;
  align-items: center;
  height: 25px;
  padding: 0 6px 0 4px;
}
.panel-head .caret {
  width: 8px;
  height: 5px;
  margin-left: auto;
  color: #666;
}
.panel-head .pin {
  width: 8px;
  height: 10px;
  margin-left: 11px;
}
.blue {
  color: #0a64c8;
}
.searchrow {
  display: flex;
  height: 20px;
}
.searchrow input {
  flex: 1;
  min-width: 0;
  padding: 0 0 3px 1px;
  background: #fff;
}
.searchrow input::placeholder {
  color: #555;
}
.clear {
  width: 18px;
  background: #e9e4d8;
  border: 1px solid #cfcabf;
  border-radius: 3px;
}
.clear svg, .filter svg {
  width: 16px;
  height: 16px;
}
.filter {
  width: 21px;
  padding-left: 3px;
}
.tree {
  flex: 1;
  margin: 0;
  padding: 1px 0 0 4px;
  list-style: none;
  background: #fff;
  border: 1px solid #82878f;
  color: #111;
}
.tree li {
  display: flex;
  align-items: center;
  gap: 5px;
  height: 18px;
}
.tree svg {
  width: 16px;
  height: 14px;
}
.tree .plus {
  width: 9px;
  height: 9px;
  margin: 0 1px 0 4px;
  border: 1px solid #919191;
  background: linear-gradient(#4060a0, #4060a0) center / 5px 1px no-repeat, linear-gradient(#4060a0, #4060a0) center / 1px 5px no-repeat, #fff;
}
.tree .plus.none {
  width: 5px;
  height: 18px;
  margin-left: 8px;
  border: none;
  border-left: 1px dotted #888;
  background: none;
}
.btabs {
  display: flex;
  align-items: flex-start;
  height: 24px;
}
.btabs button {
  display: flex;
  align-items: center;
  justify-content: center;
  gap: 1px;
  height: 22px;
  padding: 0 5px;
}
.btabs button svg {
  width: 16px;
  height: 16px;
}
.btabs .current {
  margin-right: 2px;
  background: #fff;
  border: 1px solid #a8a8a8;
  border-top: none;
  padding: 0 4px;
}
.view {
  position: relative;
  flex: 1;
  background: linear-gradient(#5078a7, #a2b6d1 47%, #fff);
}
.sketch {
  position: absolute;
  left: calc(50% + 22px);
  top: calc(50% - 55px);
  width: 112px;
  height: 66px;
}
.triad {
  position: absolute;
  left: 15px;
  bottom: 29px;
  width: 48px;
  height: 34px;
}
.ax {
  position: absolute;
  font-size: 9px;
  line-height: 10px;
}
.ax-z {
  left: 35px;
  bottom: 56px;
  color: #22b;
}
.ax-y {
  left: 16px;
  bottom: 44px;
  color: #0a0;
}
.ax-x {
  left: 54px;
  bottom: 44px;
  color: #d22;
}

/* catalog */
.catalog {
  width: 395px;
  margin-left: 6px;
}
.catbtns, .backrow {
  display: grid;
  grid-template-columns: repeat(4, 78px) 1fr;
  gap: 2px;
  padding: 0 1px 1px;
  height: 20px;
}
.catbtns button, .backrow button, .blank {
  display: flex;
  align-items: center;
  border: 1px solid #c4c4c4;
  border-radius: 4px;
  background: #f6f6f6;
  color: #111;
}
.blank {
  border-color: #dadada;
  background: #eaeaea;
}
.catbtns button svg {
  width: 16px;
  height: 16px;
  margin-left: 5px;
}
.catbtns span {
  flex: 1;
}
.items {
  flex: 1;
  display: flex;
  padding-top: 8px;
  background: #fff;
  border: 1px solid #82878f;
  color: #222;
}
.items figure {
  width: 100px;
  margin: 0;
  padding-left: 2px;
  text-align: center;
}
.items svg {
  width: 24px;
  height: 24px;
  margin: 0 auto 6px;
}
.backrow {
  grid-template-columns: 58px 120px 1fr;
  padding-top: 1px;
}
.backrow button {
  justify-content: center;
  gap: 6px;
}
.backrow button:disabled {
  color: #777;
  background: #eaeaea;
  border-color: #dadada;
}
.backrow svg {
  width: 16px;
  height: 16px;
}
.more {
  width: 8px;
  height: 8px;
  margin: 8px 5px 0 auto;
}

/* status bar */
.status {
  display: flex;
  align-items: center;
  height: 24px;
  padding: 0 5px 0 3px;
  background: #fdfdfd;
  border-top: 1px solid #ccc;
}
.status a {
  margin-right: auto;
  color: #0a64c8;
  text-decoration: underline;
}
.status .ic {
  width: 16px;
  height: 16px;
  margin-left: 4px;
}
.status .size {
  margin-right: 8px;
}
.status strong {
  margin-left: 3px;
  color: #222;
}
.unit {
  margin: 0 14px;
}
.vtools {
  display: flex;
  align-items: center;
  gap: 7px;
}
.vtools svg {
  width: 16px;
  height: 16px;
}
.vtools .caret {
  width: 5px;
  height: 4px;
}
.sel {
  display: flex;
  align-items: center;
  justify-content: center;
  width: 24px;
  height: 20px;
}
.sel svg {
  height: 16px;
}
.sel.on {
  margin-left: 2px;
  background: #cdcdcd;
}
.status select {
  height: 20px;
  padding-left: 1px;
  appearance: none;
  border: 1px solid #b4b4b4;
  color: #111;
  background: linear-gradient(45deg, transparent 50%, #777 50%) right 7px center / 3px 3px no-repeat, linear-gradient(-45deg, transparent 50%, #777 50%) right 4px center / 3px 3px no-repeat, #fff;
}
.s1 {
  width: 141px;
}
.s2 {
  width: 181px;
}

/* taskbar */
.taskbar {
  display: grid;
  grid-template-columns: 1fr auto 1fr;
  align-items: center;
  height: 48px;
  background: #202a31;
  color: #fff;
}
.weather {
  display: flex;
  align-items: center;
  gap: 8px;
  padding-left: 20px;
}
.weather svg {
  width: 24px;
  height: 18px;
}
.weather b, .weather span {
  display: block;
  font-size: 11px;
  font-weight: normal;
}
.weather span {
  color: #ccc;
}
.apps {
  display: flex;
}
.apps button {
  position: relative;
  display: flex;
  align-items: center;
  justify-content: center;
  width: 44px;
  height: 48px;
}
.apps svg {
  width: 24px;
  height: 24px;
}
.apps .ok {
  position: absolute;
  top: 11px;
  right: 6px;
  width: 10px;
  height: 10px;
}
.apps .run::after {
  content: "";
  position: absolute;
  left: 19px;
  bottom: 4px;
  width: 6px;
  height: 3px;
  border-radius: 2px;
  background: #9a9fa3;
}
.apps .front {
  width: 40px;
  height: 42px;
  margin: 3px 2px;
  border-radius: 4px;
  background: #30383e;
}
.apps .front::after {
  left: 12px;
  bottom: 1px;
  width: 16px;
  background: #1290f5;
}
.tray {
  display: flex;
  align-items: center;
  justify-content: flex-end;
  padding-right: 20px;
}
.chev {
  width: 12px;
  height: 8px;
}
.cloud {
  width: 16px;
  height: 12px;
  margin-left: 10px;
}
.ime {
  margin-left: 14px;
  font-size: 18px;
}
.just {
  width: 16px;
  height: 16px;
  margin: 0 14px 0 23px;
  border: 1px solid #fff;
  border-radius: 50%;
  text-align: center;
  line-height: 13px;
}
.net {
  width: 16px;
  height: 14px;
  margin-left: 8px;
}
.clock {
  width: 76px;
  text-align: right;
}
.clock span {
  display: block;
  font-size: 11px;
}
.badge {
  width: 16px;
  height: 16px;
  margin-left: 12px;
  border-radius: 50%;
  background: #1290f5;
  color: #111;
  font-size: 11px;
  text-align: center;
}
```
